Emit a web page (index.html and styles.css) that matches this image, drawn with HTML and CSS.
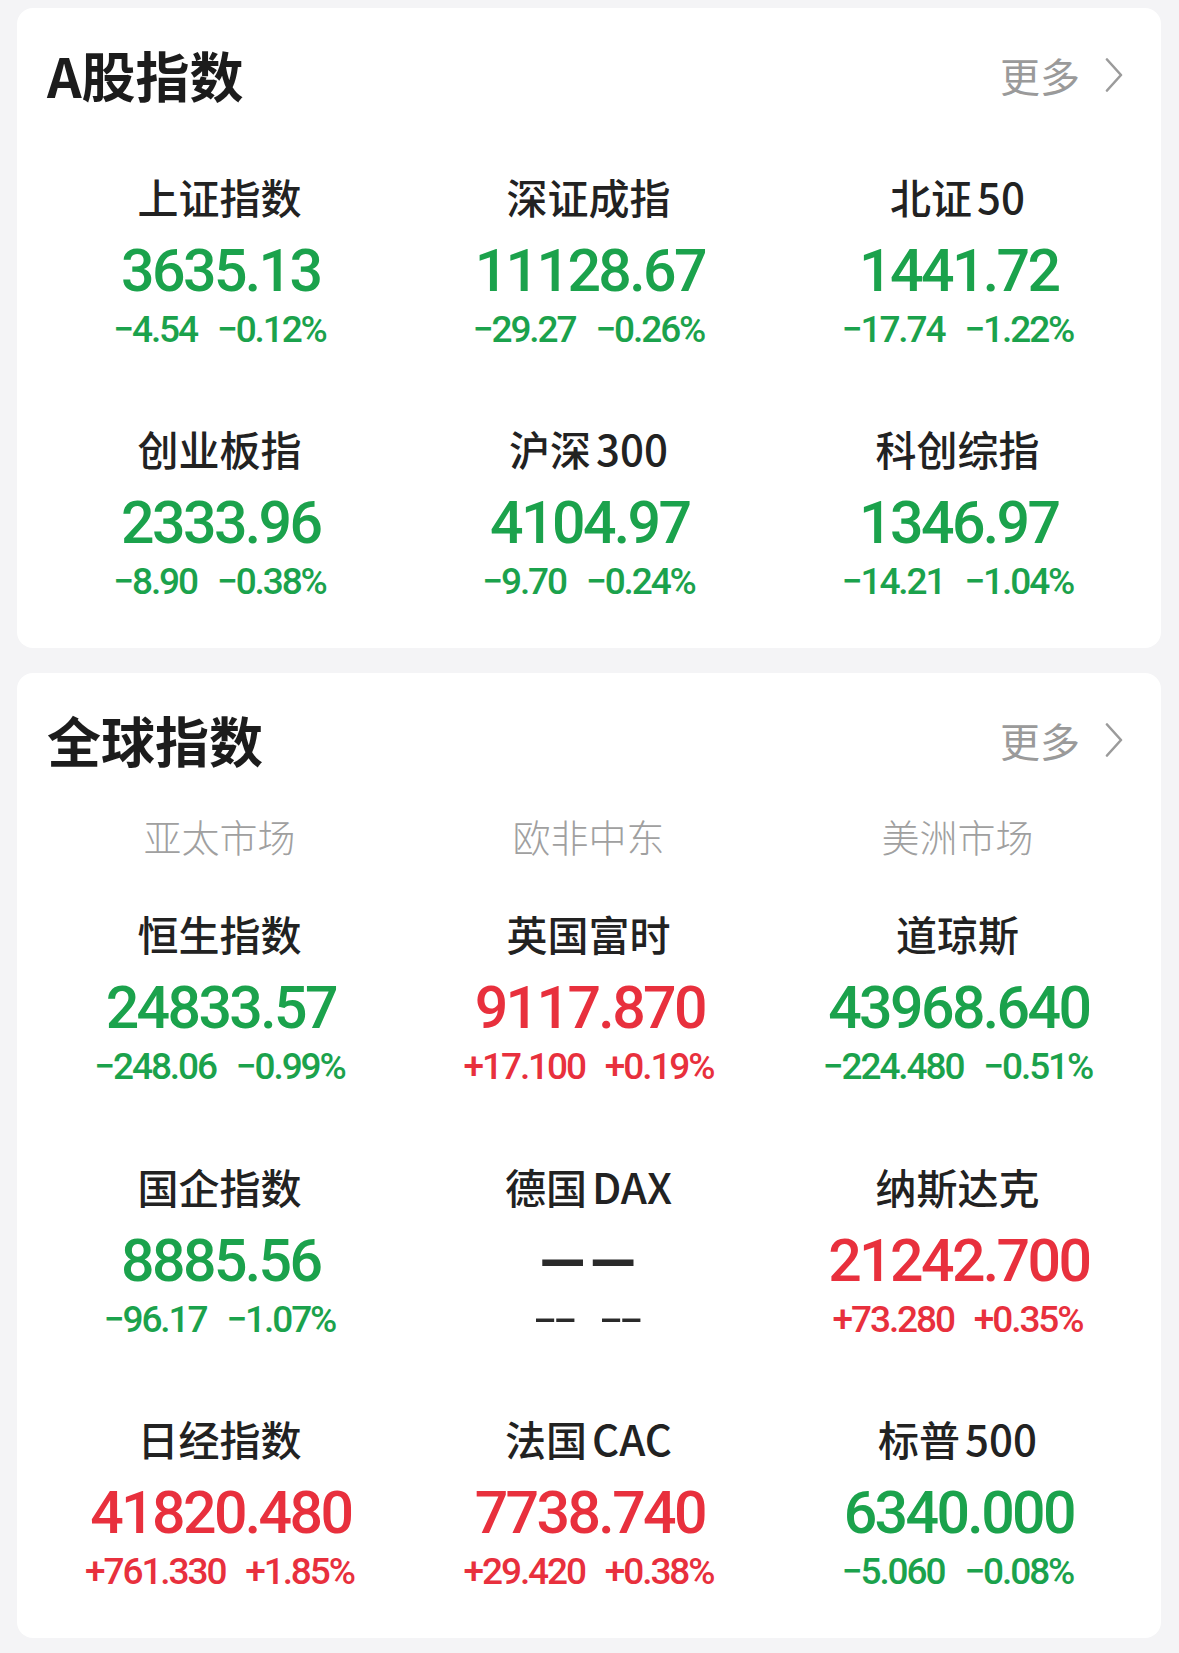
FILE: index.html
```html
<!DOCTYPE html>
<html lang="zh-CN">
<head>
<meta charset="utf-8">
<title>指数</title>
<link rel="stylesheet" href="styles.css">
</head>
<body>
<main class="page">
  <section class="card">
    <header class="card-head">
      <h2 class="card-title">A股指数</h2>
      <a class="more">更多<svg class="chev" width="20" height="34" viewBox="0 0 20 34"><polyline points="3,1.5 17,17 3,32.5" fill="none" stroke="#9b9b9b" stroke-width="2.6" stroke-linecap="round" stroke-linejoin="round"/></svg></a>
    </header>
    <div class="grid grid-a">
      <div class="cell"><div class="name">上证指数</div><div class="value down">3635.13</div><div class="chg down"><span>−4.54</span><span>−0.12%</span></div></div>
      <div class="cell"><div class="name">深证成指</div><div class="value down">11128.67</div><div class="chg down"><span>−29.27</span><span>−0.26%</span></div></div>
      <div class="cell"><div class="name">北证<span class="lat">50</span></div><div class="value down">1441.72</div><div class="chg down"><span>−17.74</span><span>−1.22%</span></div></div>
      <div class="cell"><div class="name">创业板指</div><div class="value down">2333.96</div><div class="chg down"><span>−8.90</span><span>−0.38%</span></div></div>
      <div class="cell"><div class="name">沪深<span class="lat">300</span></div><div class="value down">4104.97</div><div class="chg down"><span>−9.70</span><span>−0.24%</span></div></div>
      <div class="cell"><div class="name">科创综指</div><div class="value down">1346.97</div><div class="chg down"><span>−14.21</span><span>−1.04%</span></div></div>
    </div>
  </section>

  <section class="card">
    <header class="card-head">
      <h2 class="card-title">全球指数</h2>
      <a class="more">更多<svg class="chev" width="20" height="34" viewBox="0 0 20 34"><polyline points="3,1.5 17,17 3,32.5" fill="none" stroke="#9b9b9b" stroke-width="2.6" stroke-linecap="round" stroke-linejoin="round"/></svg></a>
    </header>
    <div class="regions">
      <div class="region">亚太市场</div>
      <div class="region">欧非中东</div>
      <div class="region">美洲市场</div>
    </div>
    <div class="grid grid-b">
      <div class="cell"><div class="name">恒生指数</div><div class="value down">24833.57</div><div class="chg down"><span>−248.06</span><span>−0.99%</span></div></div>
      <div class="cell"><div class="name">英国富时</div><div class="value up">9117.870</div><div class="chg up"><span>+17.100</span><span>+0.19%</span></div></div>
      <div class="cell"><div class="name">道琼斯</div><div class="value down">43968.640</div><div class="chg down"><span>−224.480</span><span>−0.51%</span></div></div>
      <div class="cell"><div class="name">国企指数</div><div class="value down">8885.56</div><div class="chg down"><span>−96.17</span><span>−1.07%</span></div></div>
      <div class="cell"><div class="name">德国<span class="lat">DAX</span></div><div class="value flat"><span class="dash-big">--</span></div><div class="chg flat"><span class="dash-small">--</span><span class="dash-small">--</span></div></div>
      <div class="cell"><div class="name">纳斯达克</div><div class="value up">21242.700</div><div class="chg up"><span>+73.280</span><span>+0.35%</span></div></div>
      <div class="cell"><div class="name">日经指数</div><div class="value up">41820.480</div><div class="chg up"><span>+761.330</span><span>+1.85%</span></div></div>
      <div class="cell"><div class="name">法国<span class="lat">CAC</span></div><div class="value up">7738.740</div><div class="chg up"><span>+29.420</span><span>+0.38%</span></div></div>
      <div class="cell"><div class="name">标普<span class="lat">500</span></div><div class="value down">6340.000</div><div class="chg down"><span>−5.060</span><span>−0.08%</span></div></div>
    </div>
  </section>
</main>
</body>
</html>
```

FILE: styles.css
```css
* { box-sizing: border-box; }

html, body {
  margin: 0;
  padding: 0;
  background: #f4f4f6;
}

body {
  font-family: "Noto Sans CJK SC", "Noto Sans", sans-serif;
  color: #222;
}

.page {
  padding: 8px 18px 0 17px;
}

.card {
  background: #fff;
  border-radius: 16px;
  padding: 0 19px 52px 18px;
  margin-bottom: 25px;
}

.card-head {
  height: 134px;
  display: flex;
  align-items: center;
  justify-content: space-between;
  padding: 0 18px 0 12px;
}

.card-title {
  margin: 0;
  font-size: 54px;
  line-height: 70px;
  font-weight: 700;
  color: #1c1c1c;
}

.more {
  display: flex;
  align-items: center;
  font-size: 40px;
  line-height: 50px;
  color: #9a9a9a;
}

.chev {
  margin-left: 24px;
  display: block;
}

.grid {
  display: grid;
  grid-template-columns: repeat(3, 1fr);
  row-gap: 74.5px;
}

.grid-a { margin-top: 23.5px; }
.grid-b { margin-top: 47.5px; }

.regions {
  display: grid;
  grid-template-columns: repeat(3, 1fr);
  margin-top: 8.5px;
}

.region {
  text-align: center;
  font-size: 38px;
  line-height: 40px;
  font-weight: 300;
  color: #a0a0a0;
}

.cell {
  display: flex;
  flex-direction: column;
  align-items: center;
}

.name {
  font-size: 41px;
  line-height: 60px;
  font-weight: 500;
  color: #222;
  white-space: nowrap;
}

.lat {
  margin-left: 5px;
  font-size: 42px;
}

.value {
  font-family: Roboto, "Liberation Sans", sans-serif;
  font-weight: 500;
  font-size: 59px;
  line-height: 89px;
  letter-spacing: -2.6px;
  padding-left: 2.6px;
  white-space: nowrap;
}

.chg {
  display: flex;
  justify-content: center;
  gap: 20px;
  font-family: Roboto, "Liberation Sans", sans-serif;
  font-weight: 500;
  font-size: 37px;
  line-height: 29px;
  letter-spacing: -2.1px;
  white-space: nowrap;
}

.down { color: #1ba24c; }
.up { color: #e8303d; }
.flat { color: #2a2a2a; }

.dash-big {
  display: inline-block;
  transform: translateX(-9px) scaleX(2.5);
  letter-spacing: -3px;
  padding-left: 3px;
  font-weight: 700;
}

.chg.flat { gap: 42px; }

.dash-small {
  display: inline-block;
  transform: translateX(-4px) scaleX(1.9);
  letter-spacing: -1.9px;
  padding-left: 1.9px;
  font-weight: 500;
}
```
